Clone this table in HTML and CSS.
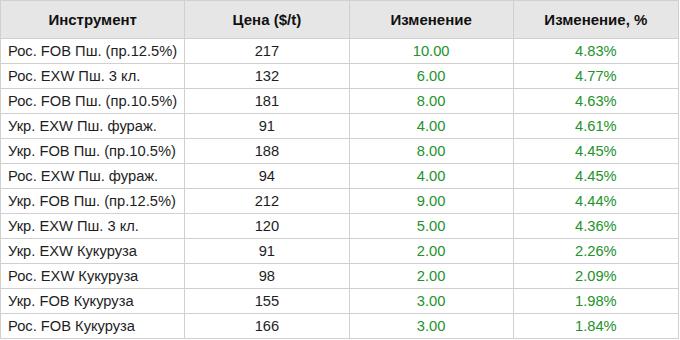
FILE: index.html
```html
<!DOCTYPE html>
<html lang="ru">
<head>
<meta charset="utf-8">
<link rel="stylesheet" href="styles.css">
</head>
<body>
<table class="quotes">
  <colgroup>
    <col class="c1"><col class="c2"><col class="c3"><col class="c4">
  </colgroup>
  <thead>
    <tr><th>Инструмент</th><th>Цена ($/t)</th><th>Изменение</th><th>Изменение, %</th></tr>
  </thead>
  <tbody>
    <tr><td class="name">Рос. FOB Пш. (пр.12.5%)</td><td>217</td><td class="up">10.00</td><td class="up">4.83%</td></tr>
    <tr><td class="name">Рос. EXW Пш. 3 кл.</td><td>132</td><td class="up">6.00</td><td class="up">4.77%</td></tr>
    <tr><td class="name">Рос. FOB Пш. (пр.10.5%)</td><td>181</td><td class="up">8.00</td><td class="up">4.63%</td></tr>
    <tr><td class="name">Укр. EXW Пш. фураж.</td><td>91</td><td class="up">4.00</td><td class="up">4.61%</td></tr>
    <tr><td class="name">Укр. FOB Пш. (пр.10.5%)</td><td>188</td><td class="up">8.00</td><td class="up">4.45%</td></tr>
    <tr><td class="name">Рос. EXW Пш. фураж.</td><td>94</td><td class="up">4.00</td><td class="up">4.45%</td></tr>
    <tr><td class="name">Укр. FOB Пш. (пр.12.5%)</td><td>212</td><td class="up">9.00</td><td class="up">4.44%</td></tr>
    <tr><td class="name">Укр. EXW Пш. 3 кл.</td><td>120</td><td class="up">5.00</td><td class="up">4.36%</td></tr>
    <tr><td class="name">Укр. EXW Кукуруза</td><td>91</td><td class="up">2.00</td><td class="up">2.26%</td></tr>
    <tr><td class="name">Рос. EXW Кукуруза</td><td>98</td><td class="up">2.00</td><td class="up">2.09%</td></tr>
    <tr><td class="name">Укр. FOB Кукуруза</td><td>155</td><td class="up">3.00</td><td class="up">1.98%</td></tr>
    <tr><td class="name">Рос. FOB Кукуруза</td><td>166</td><td class="up">3.00</td><td class="up">1.84%</td></tr>
  </tbody>
</table>
</body>
</html>
```
FILE: styles.css
```css
html, body {
  margin: 0;
  padding: 0;
  background: #ffffff;
}
.quotes {
  border-collapse: collapse;
  table-layout: fixed;
  width: 679px;
  font-family: "Liberation Sans", Arial, sans-serif;
  font-size: 14.7px;
  color: #1e1e1e;
}
.c1 { width: 184px; }
.c2 { width: 164px; }
.c3 { width: 164px; }
.c4 { width: 165px; }
.quotes th,
.quotes td {
  border: 1px solid #d0d0d0;
  padding: 0 7px;
  text-align: center;
  white-space: nowrap;
  overflow: hidden;
  line-height: 17px;
}
.quotes th {
  height: 37px;
  background: #e6e6e6;
  font-weight: bold;
  font-size: 15px;
  color: #111111;
}
.quotes td {
  height: 24px;
}
.quotes td.name {
  text-align: left;
}
.quotes td.up {
  color: #22922a;
}
```
